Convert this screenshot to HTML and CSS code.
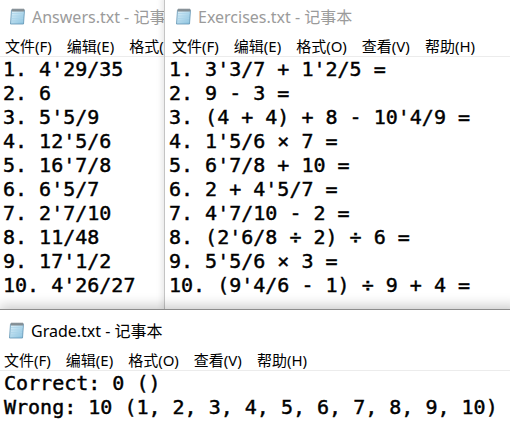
FILE: index.html
```html
<!DOCTYPE html>
<html lang="zh-CN">
<head>
<meta charset="utf-8">
<title>Notepad windows</title>
<link rel="stylesheet" href="styles.css">
</head>
<body>
<div class="desktop">
  <section class="win win-answers inactive">
    <header class="titlebar">
      <svg class="icon" viewBox="0 0 18 18" width="18" height="18"><defs><linearGradient id="padA" x1="0" y1="0" x2="1" y2="1"><stop offset="0" stop-color="#e2f3fb"/><stop offset="1" stop-color="#86c0de"/></linearGradient></defs><path d="M3.5 3 L16.5 3 L15.5 17 L2.5 17 Z" fill="url(#padA)" stroke="#5f93b3" stroke-width="0.8"/><path d="M4 6.5h11.5M3.8 9h11.5M3.6 11.5h11.5M3.4 14h11.5" stroke="#a9d3e8" stroke-width="0.7"/><path d="M3.5 2.2h13v2.2h-13z" fill="#9ea7ad"/><path d="M5 1.5v3M7 1.5v3M9 1.5v3M11 1.5v3M13 1.5v3M15 1.5v3" stroke="#5d676d" stroke-width="0.8"/></svg>
      <span class="title">Answers.txt - 记事本</span>
    </header>
    <nav class="menubar"><span class="menu">文件(F)</span><span class="menu">编辑(E)</span><span class="menu">格式(O)</span></nav>
    <pre class="content">1. 4'29/35
2. 6
3. 5'5/9
4. 12'5/6
5. 16'7/8
6. 6'5/7
7. 2'7/10
8. 11/48
9. 17'1/2
10. 4'26/27</pre>
  </section>

  <section class="win win-exercises inactive">
    <header class="titlebar">
      <svg class="icon" viewBox="0 0 18 18" width="18" height="18"><defs><linearGradient id="padB" x1="0" y1="0" x2="1" y2="1"><stop offset="0" stop-color="#e2f3fb"/><stop offset="1" stop-color="#86c0de"/></linearGradient></defs><path d="M3.5 3 L16.5 3 L15.5 17 L2.5 17 Z" fill="url(#padB)" stroke="#5f93b3" stroke-width="0.8"/><path d="M4 6.5h11.5M3.8 9h11.5M3.6 11.5h11.5M3.4 14h11.5" stroke="#a9d3e8" stroke-width="0.7"/><path d="M3.5 2.2h13v2.2h-13z" fill="#9ea7ad"/><path d="M5 1.5v3M7 1.5v3M9 1.5v3M11 1.5v3M13 1.5v3M15 1.5v3" stroke="#5d676d" stroke-width="0.8"/></svg>
      <span class="title">Exercises.txt - 记事本</span>
    </header>
    <nav class="menubar"><span class="menu">文件(F)</span><span class="menu">编辑(E)</span><span class="menu">格式(O)</span><span class="menu">查看(V)</span><span class="menu">帮助(H)</span></nav>
    <pre class="content">1. 3'3/7 + 1'2/5 =
2. 9 - 3 =
3. (4 + 4) + 8 - 10'4/9 =
4. 1'5/6 × 7 =
5. 6'7/8 + 10 =
6. 2 + 4'5/7 =
7. 4'7/10 - 2 =
8. (2'6/8 ÷ 2) ÷ 6 =
9. 5'5/6 × 3 =
10. (9'4/6 - 1) ÷ 9 + 4 =</pre>
  </section>

  <section class="win win-grade active">
    <header class="titlebar">
      <svg class="icon" viewBox="0 0 18 18" width="18" height="18"><defs><linearGradient id="padC" x1="0" y1="0" x2="1" y2="1"><stop offset="0" stop-color="#e2f3fb"/><stop offset="1" stop-color="#86c0de"/></linearGradient></defs><path d="M3.5 3 L16.5 3 L15.5 17 L2.5 17 Z" fill="url(#padC)" stroke="#5f93b3" stroke-width="0.8"/><path d="M4 6.5h11.5M3.8 9h11.5M3.6 11.5h11.5M3.4 14h11.5" stroke="#a9d3e8" stroke-width="0.7"/><path d="M3.5 2.2h13v2.2h-13z" fill="#9ea7ad"/><path d="M5 1.5v3M7 1.5v3M9 1.5v3M11 1.5v3M13 1.5v3M15 1.5v3" stroke="#5d676d" stroke-width="0.8"/></svg>
      <span class="title">Grade.txt - 记事本</span>
    </header>
    <nav class="menubar"><span class="menu">文件(F)</span><span class="menu">编辑(E)</span><span class="menu">格式(O)</span><span class="menu">查看(V)</span><span class="menu">帮助(H)</span></nav>
    <pre class="content">Correct: 0 ()
Wrong: 10 (1, 2, 3, 4, 5, 6, 7, 8, 9, 10)</pre>
  </section>
</div>
</body>
</html>
```

FILE: styles.css
```css
* { box-sizing: border-box; }
html, body {
  margin: 0;
  padding: 0;
  width: 510px;
  height: 435px;
  overflow: hidden;
  background: #ffffff;
}
.desktop {
  position: relative;
  width: 510px;
  height: 435px;
  overflow: hidden;
}
.win {
  position: absolute;
  background: #ffffff;
  display: flex;
  flex-direction: column;
  overflow: hidden;
}
.win-answers {
  left: 0;
  top: -4px;
  width: 164px;
  height: 313px;
  z-index: 1;
}
.win-exercises {
  left: 164px;
  top: -4px;
  width: 360px;
  height: 313px;
  border-left: 1px solid #c4c4c4;
  box-shadow: -2px 0 6px rgba(0, 0, 0, 0.10);
  z-index: 2;
}
.win-grade {
  left: -1px;
  top: 309px;
  width: 520px;
  height: 140px;
  border-top: 1px solid #8c8c8c;
  box-shadow: 0 -3px 12px rgba(0, 0, 0, 0.22);
  z-index: 3;
}
.titlebar {
  height: 39px;
  flex: none;
  display: flex;
  align-items: center;
  padding-left: 8px;
  gap: 6px;
  font-family: "Noto Sans", "Noto Sans CJK SC", sans-serif;
  font-size: 16px;
  white-space: nowrap;
  overflow: hidden;
}
.win-grade .titlebar { padding-left: 8px; }
.win-exercises .titlebar { padding-left: 9px; }
.icon { flex: none; display: block; }
.inactive .title { color: #9b9b9b; }
.active .title { color: #000000; }
.menubar {
  height: 22px;
  flex: none;
  display: flex;
  align-items: center;
  gap: 15px;
  padding-left: 5px;
  font-family: "Noto Sans", "Noto Sans CJK SC", sans-serif;
  font-size: 15px;
  color: #000000;
  white-space: nowrap;
  overflow: hidden;
  border-bottom: 1px solid #ececec;
}
.win-exercises .menubar { padding-left: 7px; }
.menu { display: block; line-height: 22px; flex: none; }
.content {
  margin: 0;
  padding: 0 0 0 4px;
  font-family: "DejaVu Sans Mono", monospace;
  font-weight: normal;
  -webkit-text-stroke: 0.45px #000000;
  font-size: 20px;
  line-height: 24px;
  color: #000000;
  white-space: pre;
}
.win-answers .content { padding-left: 3px; }
.win-exercises .content { padding-left: 4px; }
.win-grade .content { padding-left: 5px; }
```
